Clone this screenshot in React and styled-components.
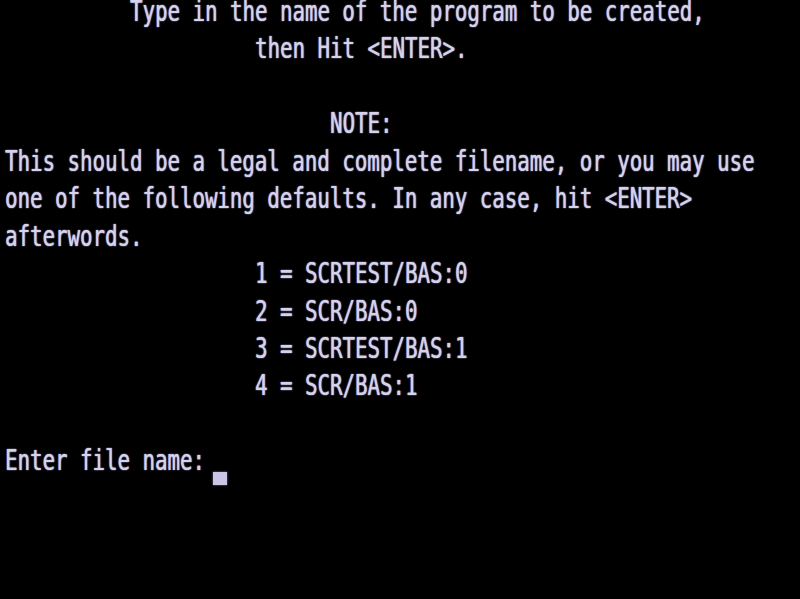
import React from "react";
import styled, { createGlobalStyle } from "styled-components";

const Global = createGlobalStyle`
  html, body {
    margin: 0;
    padding: 0;
    background: #000;
  }
`;

const Screen = styled.div`
  width: 800px;
  height: 599px;
  background: #000;
  display: grid;
  grid-template-rows: repeat(16, 1fr);
`;

const Row = styled.div`
  display: flex;
  align-items: flex-start;
  padding-left: ${p => 5 + (p.col || 0) * 12.5}px;
`;

const Text = styled.span`
  display: inline-block;
  white-space: pre;
  font-family: "DejaVu Sans Mono", "Liberation Mono", monospace;
  font-size: 20.76px;
  line-height: 17px;
  color: #d6d2ec;
  text-shadow: 0 0 1px rgba(205, 200, 240, 0.9), 0.4px 0 1px rgba(205, 200, 240, 0.6);
  transform: scaleY(1.39);
  transform-origin: top left;
`;

const Cursor = styled.span`
  display: inline-block;
  width: 14px;
  height: 13px;
  margin-top: 23px;
  margin-left: -4px;
  background: #c9c5e6;
  box-shadow: 0 0 2px rgba(200, 195, 235, 0.6);
`;

const lines = [
  { col: 10, text: "Type in the name of the program to be created," },
  { col: 20, text: "then Hit <ENTER>." },
  { text: "" },
  { col: 26, text: "NOTE:" },
  { text: "This should be a legal and complete filename, or you may use" },
  { text: "one of the following defaults. In any case, hit <ENTER>" },
  { text: "afterwords." },
  { col: 20, text: "1 = SCRTEST/BAS:0" },
  { col: 20, text: "2 = SCR/BAS:0" },
  { col: 20, text: "3 = SCRTEST/BAS:1" },
  { col: 20, text: "4 = SCR/BAS:1" },
  { text: "" },
];

export default function App() {
  return (
    <>
      <Global />
      <Screen>
        {lines.map((l, i) => (
          <Row key={i} col={l.col}>
            <Text>{l.text}</Text>
          </Row>
        ))}
        <Row>
          <Text>{"Enter file name: "}</Text>
          <Cursor />
        </Row>
      </Screen>
    </>
  );
}
